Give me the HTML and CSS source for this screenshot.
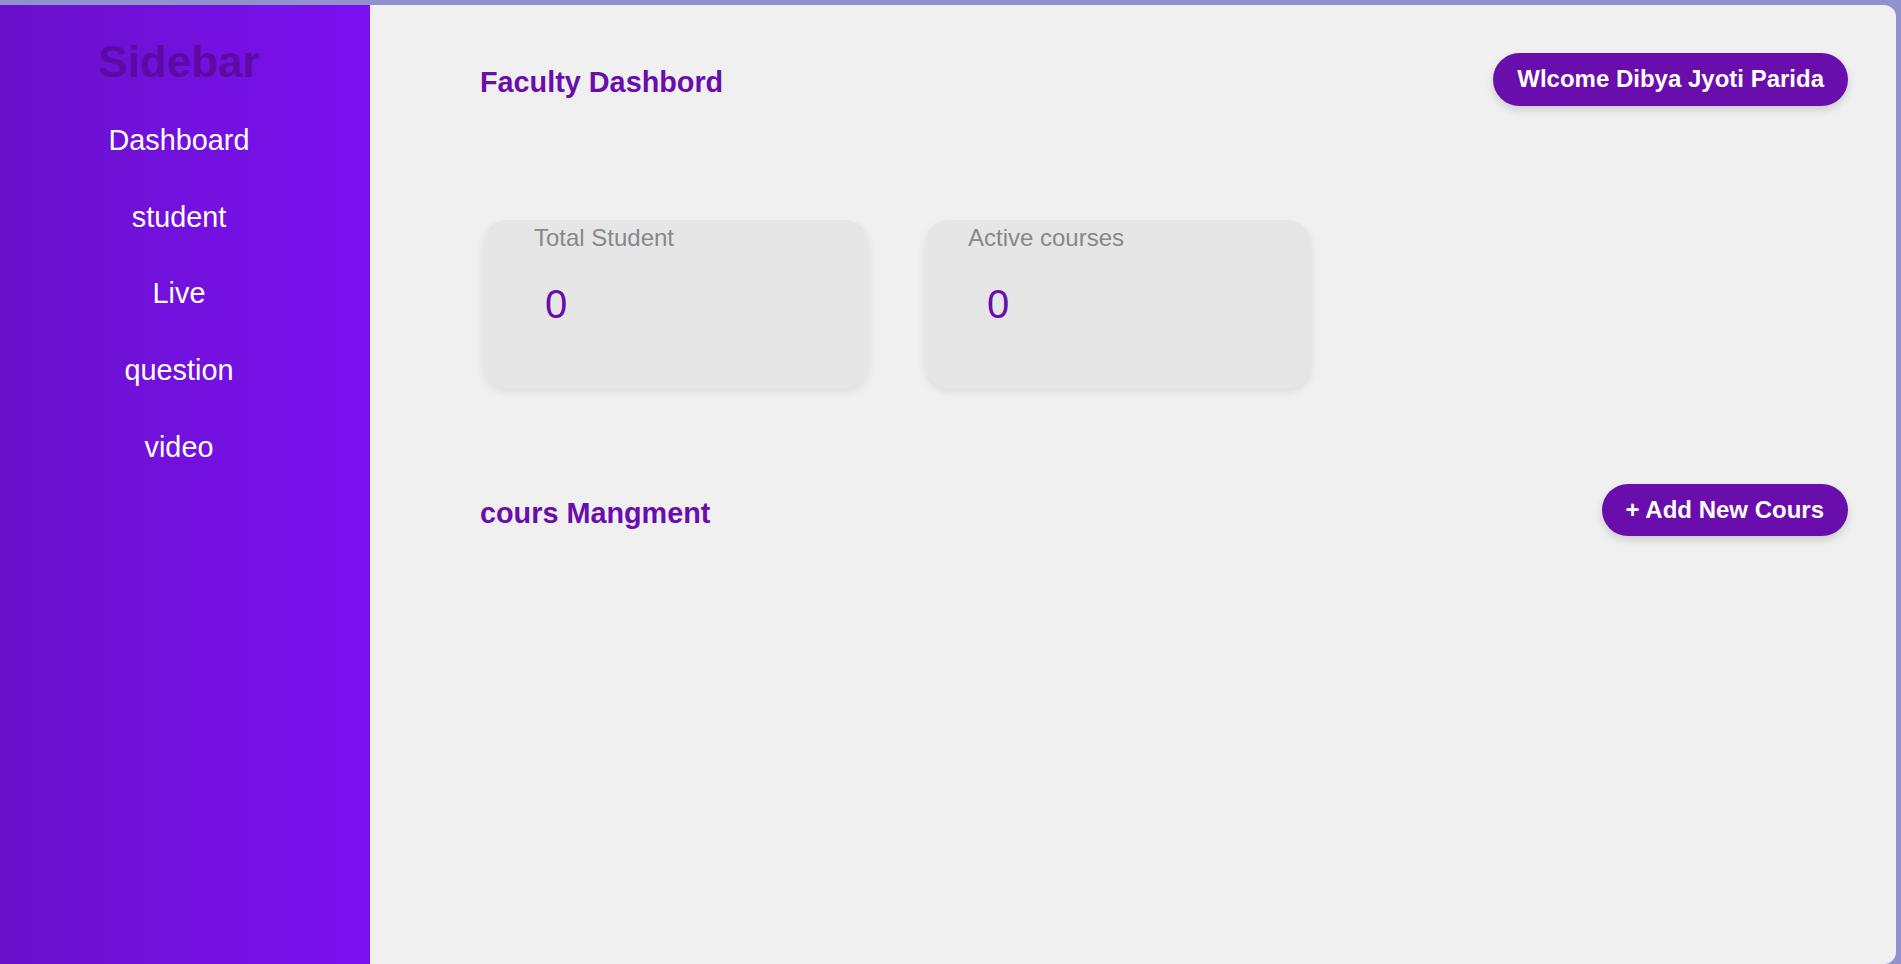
FILE: index.html
```html
<!DOCTYPE html>
<html lang="en">
<head>
<meta charset="utf-8">
<title>Faculty Dashbord</title>
<link rel="stylesheet" href="styles.css">
</head>
<body>
<div class="layout">
  <aside class="sidebar">
    <h1 class="sidebar-title">Sidebar</h1>
    <nav class="nav">
      <a class="nav-item" href="#">Dashboard</a>
      <a class="nav-item" href="#">student</a>
      <a class="nav-item" href="#">Live</a>
      <a class="nav-item" href="#">question</a>
      <a class="nav-item" href="#">video</a>
    </nav>
  </aside>
  <main class="main">
    <header class="row-head">
      <h2 class="heading">Faculty Dashbord</h2>
      <button class="pill">Wlcome Dibya Jyoti Parida</button>
    </header>
    <section class="stats">
      <div class="card">
        <h3 class="card-label">Total Student</h3>
        <p class="card-value">0</p>
      </div>
      <div class="card">
        <h3 class="card-label">Active courses</h3>
        <p class="card-value">0</p>
      </div>
    </section>
    <section class="row-head row-courses">
      <h2 class="heading">cours Mangment</h2>
      <button class="pill">+ Add New Cours</button>
    </section>
  </main>
</div>
</body>
</html>
```

FILE: styles.css
```css
* {
  box-sizing: border-box;
}

html, body {
  margin: 0;
  padding: 0;
  height: 100%;
}

body {
  background: #9191cd;
  font-family: "Liberation Sans", Arial, sans-serif;
  overflow: hidden;
}

.layout {
  display: flex;
  height: 100vh;
  padding: 5px 5px 0 0;
}

.sidebar {
  width: 370px;
  flex: 0 0 370px;
  background: linear-gradient(to right, #6a11cb, #7b10f0);
  padding: 0 12px 0 0;
  text-align: center;
}

.sidebar-title {
  margin: 31px 0 15px;
  font-size: 44px;
  font-weight: bold;
  line-height: 51px;
  color: #5d0aa3;
}

.nav {
  display: flex;
  flex-direction: column;
}

.nav-item {
  display: block;
  color: #ffffff;
  text-decoration: none;
  font-size: 28.8px;
  line-height: 33px;
  padding: 21.9px 0;
}

.main {
  flex: 1;
  background: #f0f0f0;
  border-radius: 0 12px 12px 0;
  padding: 48px 48px 0 110px;
}

.row-head {
  display: flex;
  justify-content: space-between;
  align-items: flex-start;
}

.heading {
  margin: 13px 0 0;
  font-size: 28.8px;
  font-weight: bold;
  line-height: 33px;
  color: #6a0dad;
}

.pill {
  border: none;
  background: #6a0dad;
  color: #ffffff;
  font-family: "Liberation Sans", Arial, sans-serif;
  font-size: 24px;
  font-weight: bold;
  line-height: 28.5px;
  padding: 12px 24px;
  border-radius: 28px;
  box-shadow: 0 4px 8px rgba(0, 0, 0, 0.15);
  cursor: pointer;
}

.stats {
  display: flex;
  gap: 56px;
  margin-top: 114px;
  padding-left: 3px;
}

.card {
  width: 386px;
  height: 168px;
  background: #e6e6e6;
  border-radius: 24px;
  box-shadow: 0 4px 8px rgba(0, 0, 0, 0.08);
  padding-top: 5px;
}

.card-label {
  width: 242px;
  margin: 0;
  text-align: center;
  font-size: 24px;
  font-weight: normal;
  line-height: 26px;
  color: #888888;
}

.card-value {
  margin: 31px 0 0 62px;
  font-size: 40px;
  line-height: 45px;
  color: #6a0dad;
}

.row-courses {
  margin-top: 96px;
}
```
